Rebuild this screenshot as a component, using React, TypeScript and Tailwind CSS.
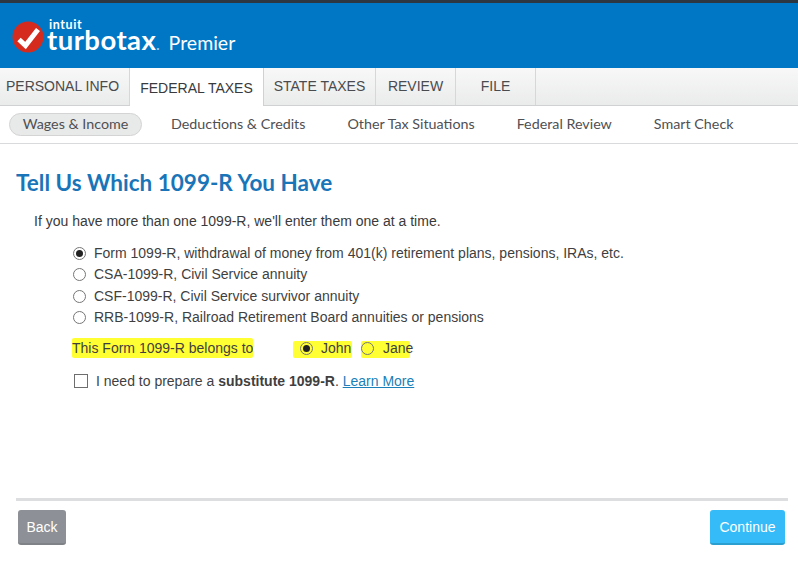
const tabs = [
  { label: "PERSONAL INFO", width: "w-[130px] pr-[4px]" },
  { label: "FEDERAL TAXES", width: "w-[134px]", active: true },
  { label: "STATE TAXES", width: "w-[112px]" },
  { label: "REVIEW", width: "w-[80px]" },
  { label: "FILE", width: "w-[80px]" },
];

const forms = [
  "Form 1099-R, withdrawal of money from 401(k) retirement plans, pensions, IRAs, etc.",
  "CSA-1099-R, Civil Service annuity",
  "CSF-1099-R, Civil Service survivor annuity",
  "RRB-1099-R, Railroad Retirement Board annuities or pensions",
];

function Radio({ checked }: { checked?: boolean }) {
  return (
    <span className="flex h-[13px] w-[13px] shrink-0 items-center justify-center rounded-full border border-[#767676] bg-transparent">
      {checked && <span className="h-[7px] w-[7px] rounded-full bg-[#222]" />}
    </span>
  );
}

function Logo() {
  return (
    <div className="flex items-center pl-3">
      <svg width="32" height="32" viewBox="0 0 32 32" className="mt-[6px] shrink-0">
        <circle cx="16" cy="16" r="15.5" fill="#d52b1e" />
        <path d="M7 18.5l6.5 6L26 8.5" fill="none" stroke="#fff" strokeWidth="5" />
      </svg>
      <div className="ml-[3px] flex flex-col text-white">
        <span className="ml-[2px] mt-[5px] h-[9px] font-['Lato',sans-serif] text-[12.5px] font-bold leading-[9px] tracking-[0.6px]">
          intuit
        </span>
        <div className="mt-[-3px] flex h-[27px] items-baseline">
          <span className="font-['Lato',sans-serif] text-[27.5px] font-bold leading-[27px] tracking-[0.45px]">turbotax</span>
          <span className="font-['Lato',sans-serif] text-[14px] font-bold leading-[27px] text-[#9fd0ee]">.</span>
          <span className="ml-[9px] font-['Lato',sans-serif] text-[19.5px] leading-[27px]">Premier</span>
        </div>
      </div>
    </div>
  );
}

export default function App() {
  return (
    <div className="flex h-[577px] w-[798px] flex-col overflow-hidden bg-white font-['Liberation_Sans',sans-serif] text-[#393a3d]">
      <header className="h-[68px] shrink-0 border-t-[3px] border-[#2d3741] bg-[#0077c5] pt-[12px]">
        <Logo />
      </header>

      <nav className="flex h-[38px] shrink-0 border-b border-[#cfd1d3] bg-gradient-to-b from-[#f8f8f8] to-[#eaebeb]">
        {tabs.map((tab) => (
          <div
            key={tab.label}
            className={
              tab.active
                ? `${tab.width} -mb-px flex items-center justify-center border-r border-[#cfd1d3] bg-white pt-[2px] text-[14px] text-[#393a3d]`
                : `${tab.width} flex items-center justify-center border-r border-[#d6d7d8] text-[14px] text-[#4a4b4e]`
            }
          >
            {tab.label}
          </div>
        ))}
      </nav>

      <div className="flex h-[38px] shrink-0 items-center border-b border-[#d9dadb] pb-[1px] pl-[9px] font-['Lato',sans-serif] text-[14.3px] text-[#4f5053]">
        <span className="flex h-[23px] w-[133px] items-center justify-center rounded-full border border-[#d4d4d4] bg-[#e8e9e9]">
          Wages &amp; Income
        </span>
        <span className="ml-[29px]">Deductions &amp; Credits</span>
        <span className="ml-[42px]">Other Tax Situations</span>
        <span className="ml-[42px]">Federal Review</span>
        <span className="ml-[42px]">Smart Check</span>
      </div>

      <main className="flex min-h-0 flex-1 flex-col pl-4 pr-[10px]">
        <h1 className="mt-[25px] font-['Lato',sans-serif] text-[22.5px] font-bold leading-[28px] text-[#1a75b8]">
          Tell Us Which 1099-R You Have
        </h1>

        <p className="ml-[18px] mt-[14px] text-[14px] leading-[20px] text-[#3a3a3a]">
          If you have more than one 1099-R, we'll enter them one at a time.
        </p>

        <div className="ml-[57px] mt-[12px] flex flex-col gap-[1.5px]">
          {forms.map((form, i) => (
            <label key={form} className="flex h-[20px] items-center gap-[8px] text-[14px] text-[#3f3f3f]">
              <Radio checked={i === 0} />
              {form}
            </label>
          ))}
        </div>

        <div className="ml-[56px] mt-[10.5px] flex h-[20px] items-end whitespace-nowrap text-[14px] text-[#3f3f3f]">
          <span className="flex h-[20px] w-[181px] items-center rounded-[2px] bg-[#ffff33]">This Form 1099-R belongs to</span>
          <span className="ml-[40px] flex h-[17px] w-[59px] items-center gap-[8px] rounded-[2px] bg-[#ffff33] pb-[3px] pl-[7px]">
            <Radio checked />
            John
          </span>
          <span className="ml-[9px] flex h-[17px] w-[49px] items-center gap-[9px] rounded-[2px] bg-[#ffff33] pb-[3px]">
            <Radio />
            Jane
          </span>
        </div>

        <label className="ml-[58px] mt-[12px] flex h-[22px] items-center gap-[8px] text-[14px] text-[#3f3f3f]">
          <span className="h-[14px] w-[14px] shrink-0 border border-[#6e6e6e]" />
          <span>
            I need to prepare a <b className="font-bold">substitute 1099-R</b>.{" "}
            <a className="text-[#1b7fb8] underline">Learn More</a>
          </span>
        </label>

        <div className="mt-auto border-t-[3px] border-[#dcdedf] pb-[32px] pt-[9px]">
          <div className="flex items-start justify-between pl-[2px] pr-[3px]">
            <button className="h-[35px] w-[48px] rounded-[3px] border-b-2 border-[#7f8286] bg-[#8d9096] pt-[2px] text-[14px] text-white">
              Back
            </button>
            <button className="h-[35px] w-[75px] rounded-[3px] border-b-2 border-[#2a9fd0] bg-[#35bcf8] pt-[2px] text-[14px] text-white">
              Continue
            </button>
          </div>
        </div>
      </main>
    </div>
  );
}
